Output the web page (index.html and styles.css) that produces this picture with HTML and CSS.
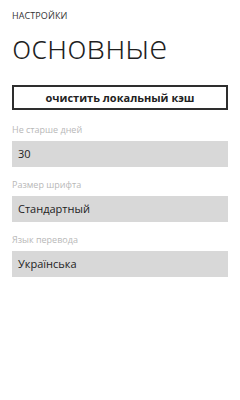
FILE: index.html
```html
<!DOCTYPE html>
<html lang="ru">
<head>
<meta charset="utf-8">
<link rel="stylesheet" href="styles.css">
</head>
<body>
<div class="page">
  <div class="app-title">НАСТРОЙКИ</div>
  <h1 class="page-title">основные</h1>
  <button class="btn">очистить локальный кэш</button>
  <div class="field">
    <div class="label">Не старше дней</div>
    <div class="box">30</div>
  </div>
  <div class="field">
    <div class="label">Размер шрифта</div>
    <div class="box">Стандартный</div>
  </div>
  <div class="field">
    <div class="label">Язык перевода</div>
    <div class="box">Українська</div>
  </div>
</div>
</body>
</html>
```
FILE: styles.css
```css
html, body {
  margin: 0;
  padding: 0;
  background: #ffffff;
}
body {
  font-family: "Open Sans", "Noto Sans", sans-serif;
  color: #1f1f1f;
}
.page {
  display: flex;
  flex-direction: column;
  padding: 10px 12px 0 12px;
}
.app-title {
  font-size: 9px;
  line-height: 12px;
  color: #333;
  letter-spacing: 0.1px;
}
.page-title {
  margin: 5px 0 0 0;
  font-size: 33px;
  line-height: 40px;
  font-weight: 300;
  color: #1f1f1f;
}
.btn {
  margin: 18px 0 3px 0;
  height: 25px;
  border: 2px solid #2e2e2e;
  background: #fff;
  font-family: "Open Sans", "Noto Sans", sans-serif;
  font-size: 11px;
  font-weight: 700;
  color: #222;
  padding: 0;
}
.field {
  display: flex;
  flex-direction: column;
}
.field + .field .label {
  margin-top: 11px;
}
.label {
  margin-top: 10px;
  font-size: 9px;
  line-height: 14px;
  color: #b8b8b8;
}
.box {
  margin-top: 4px;
  height: 26px;
  background: #d8d8d8;
  font-size: 11px;
  line-height: 26px;
  padding-left: 6px;
  color: #222;
}
```
